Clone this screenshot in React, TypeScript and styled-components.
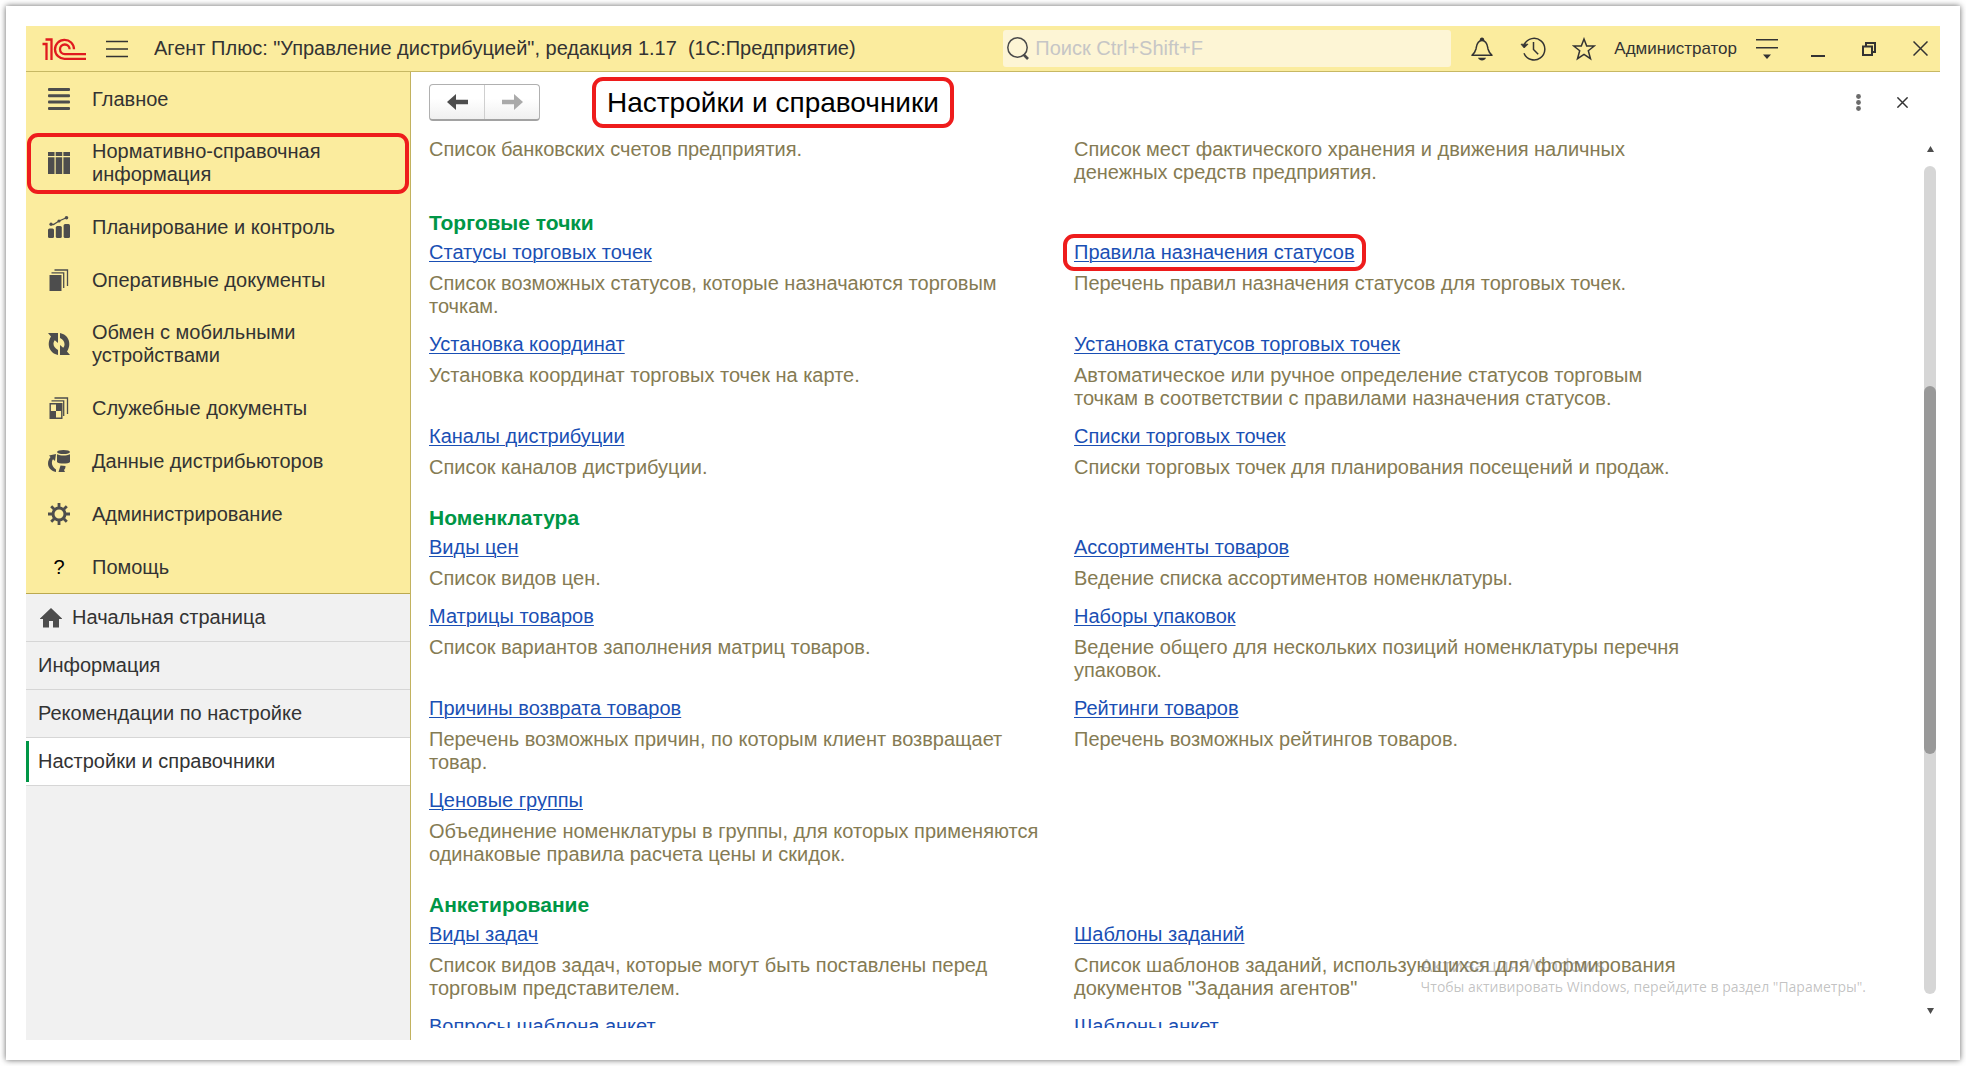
import React from "react";
import styled, { createGlobalStyle, css } from "styled-components";

const GlobalStyle = createGlobalStyle`
  *, *::before, *::after { box-sizing: border-box; }
  body {
    margin: 0;
    background: #fff;
    color: #333;
    font-family: "Liberation Sans", Arial, sans-serif;
    font-size: 20px;
    line-height: 23px;
  }
  h1, h2, p { margin: 0; }
  a { color: inherit; text-decoration: none; }
  button {
    margin: 0;
    padding: 0;
    border: 0;
    background: none;
    color: inherit;
    font: inherit;
    cursor: pointer;
  }
`;

const accent = css`
  border: 4px solid #ee1c1c;
  border-radius: 11px;
`;

const Page = styled.div`
  display: flex;
  height: 100vh;
  padding: 6px;
`;

const Card = styled.div`
  display: flex;
  flex: 1;
  min-width: 0;
  padding: 20px;
  background: #fff;
  box-shadow: 0 0 6px rgba(0, 0, 0, 0.6);
`;

const Window = styled.div`
  display: flex;
  flex: 1;
  flex-direction: column;
  min-width: 0;
`;

const TopBar = styled.header`
  display: flex;
  flex: none;
  align-items: center;
  gap: 11px;
  height: 46px;
  padding-left: 16px;
  background: #fbec9e;
  border-bottom: 1px solid #c7b864;
`;

const MenuButton = styled.button`
  display: flex;
  margin: 0 15px 0 8px;
`;

const AppTitle = styled.div`
  flex: 1;
  min-width: 0;
  overflow: hidden;
  white-space: nowrap;
`;

const Search = styled.label`
  display: flex;
  flex: 0 1 448px;
  align-items: center;
  gap: 6px;
  height: 37px;
  padding: 0 4px;
  border-radius: 3px;
  background: #fdf5d5;
`;

const SearchInput = styled.input`
  flex: 1;
  min-width: 0;
  padding: 0;
  border: 0;
  outline: 0;
  background: none;
  color: #333;
  font: inherit;
  &::placeholder { color: #c6c6c6; opacity: 1; }
`;

const BarButton = styled.button`
  display: flex;
  flex: none;
  align-items: center;
  justify-content: center;
  width: 40px;
  height: 40px;
`;

const UserName = styled.button`
  flex: none;
  margin: 0 -1px;
  font-size: 17px;
`;

const Body = styled.div`
  display: flex;
  flex: 1;
  min-height: 0;
`;

const Sidebar = styled.aside`
  display: flex;
  flex: none;
  flex-direction: column;
  width: 385px;
  background: #f1f1f1;
  border-right: 1px solid #c2b25f;
`;

const Sections = styled.nav`
  background: #fbec9e;
  border-bottom: 1px solid #bba94f;
`;

const SectionLink = styled.a<{ $marked?: boolean }>`
  position: relative;
  display: flex;
  align-items: center;
  gap: 22px;
  min-height: 53px;
  padding: 15px 60px 14px 22px;
  ${(p) =>
    p.$marked &&
    css`
      &::after {
        content: "";
        position: absolute;
        inset: 8px 1px 6px;
        ${accent}
      }
    `}
`;

const SectionIcon = styled.span`
  display: flex;
  flex: none;
  justify-content: center;
  width: 22px;
  color: #4d4d4d;
`;

const HelpMark = styled.span`
  color: #000;
`;

const Tabs = styled.nav`
  display: flex;
  flex-direction: column;
`;

const Tab = styled.a<{ $active?: boolean }>`
  position: relative;
  display: flex;
  align-items: center;
  gap: 10px;
  height: 48px;
  padding: 0 12px;
  border-bottom: 1px solid #d6d6d6;
  background: ${(p) => (p.$active ? "#fff" : "transparent")};
  ${(p) =>
    p.$active &&
    css`
      &::before {
        content: "";
        position: absolute;
        inset: 3px auto 3px 0;
        width: 3px;
        background: #009646;
      }
    `}
`;

const Main = styled.main`
  position: relative;
  display: flex;
  flex: 1;
  flex-direction: column;
  min-width: 0;
  padding-bottom: 12px;
`;

const PageHead = styled.div`
  display: flex;
  flex: none;
  align-items: center;
  padding: 5px 18px 5px 18px;
`;

const History = styled.div`
  display: flex;
  width: 111px;
  height: 37px;
  border: 1px solid #b0b0b0;
  border-bottom: 2px solid #a2a2a2;
  border-radius: 4px;
  background: linear-gradient(#fff 40%, #f0f0f0);
`;

const HistoryButton = styled.button`
  display: flex;
  flex: 1;
  align-items: center;
  justify-content: center;
  & + & { border-left: 1px solid #cfcfcf; }
`;

const PageTitle = styled.h1`
  margin: 0 auto 0 52px;
  padding: 6px 11px;
  color: #000;
  font-size: 28px;
  font-weight: 400;
  line-height: 31px;
  ${accent}
`;

const PageButton = styled(BarButton)`
  & + & { margin-left: 4px; }
`;

const Scroller = styled.div`
  display: flex;
  flex: 1;
  min-height: 0;
  padding-right: 4px;
`;

const Content = styled.div`
  flex: 1;
  min-width: 0;
  padding: 5px 18px 0;
  overflow: hidden;
`;

const Group = styled.section`
  & + & { margin-top: 27px; }
`;

const GroupTitle = styled.h2`
  margin-bottom: 7px;
  color: #009646;
  font-size: 21px;
  line-height: 23px;
`;

const Grid = styled.div`
  display: grid;
  grid-template-columns: repeat(2, minmax(0, 620px));
  gap: 15px 25px;
`;

const Command = styled.div`
  display: flex;
  flex-direction: column;
  align-items: flex-start;
  gap: 8px;
`;

const CommandLink = styled.a<{ $marked?: boolean }>`
  position: relative;
  color: #1a4fb4;
  text-decoration: underline;
  text-decoration-thickness: 1px;
  text-underline-offset: 2px;
  ${(p) =>
    p.$marked &&
    css`
      &::after {
        content: "";
        position: absolute;
        inset: -7px -11px;
        ${accent}
      }
    `}
`;

const Description = styled.p`
  color: #857b53;
`;

const Scrollbar = styled.div`
  display: flex;
  flex: none;
  flex-direction: column;
  align-items: center;
  gap: 7px;
  width: 12px;
  padding: 6px 0 7px;
`;

const ScrollArrow = styled.button`
  display: flex;
  flex: none;
  align-items: center;
  justify-content: center;
  width: 12px;
  height: 20px;
`;

const Track = styled.div`
  display: flex;
  flex: 1;
  flex-direction: column;
  width: 12px;
  border-radius: 6px;
  background: #d6d6d6;
`;

const Space = styled.div<{ $grow: number }>`
  flex: ${(p) => p.$grow} 1 0;
`;

const Thumb = styled.div`
  flex: 367 1 0;
  border-radius: 6px;
  background: #999;
`;

const Watermark = styled.div`
  position: absolute;
  right: 74px;
  bottom: 42px;
  color: rgba(120, 120, 120, 0.45);
  font-family: "Open Sans", "Noto Sans", sans-serif;
  font-size: 14px;
  line-height: 22px;
  white-space: nowrap;
  pointer-events: none;
`;

const WatermarkTitle = styled.div`
  font-size: 19px;
`;

const Logo = () => (
  <svg width="45" height="24" viewBox="0 0 45 24" fill="none" stroke="#e01a1f" strokeWidth="2.3">
    <path d="M0.5 7h4v16M3.5 2.5h6V23" />
    <path d="M32 12.3A9.5 9.5 0 1 0 22.8 21.8H44" />
    <path d="M27.6 12.3A4.8 4.8 0 1 0 22.8 17.1H44" />
  </svg>
);

const BurgerIcon = () => (
  <svg width="22" height="18" viewBox="0 0 22 18" stroke="#333" strokeWidth="1.3">
    <path d="M0 1.5h22M0 9h22M0 16.5h22" />
  </svg>
);

const SearchIcon = () => (
  <svg width="22" height="23" viewBox="0 0 22 23" fill="none" stroke="#4a4a4a" strokeWidth="1.5">
    <circle cx="10.5" cy="10.5" r="9.7" />
    <path d="M16.5 17.5l4.5 4.5" strokeWidth="2.6" />
  </svg>
);

const BellIcon = () => (
  <svg width="22" height="24" viewBox="0 0 22 24" fill="none" stroke="#333" strokeWidth="1.5">
    <path d="M1 18.2h20c-2-1.800-3.300-3.200-4-6.200-.6-3-.7-8.500-6-8.500S5.600 9 5 12c-.7 3-2 4.400-4 6.200z" strokeLinejoin="round" />
    <path d="M9.500 3.200a1.500 2 0 0 1 3 0z" fill="#333" />
    <path d="M7 20.800h8c-.8 1.900-2.200 2.600-4 2.600s-3.200-.7-4-2.600z" fill="#333" stroke="none" />
  </svg>
);

const ClockIcon = () => (
  <svg width="26" height="24" viewBox="0 0 26 24" fill="none" stroke="#333" strokeWidth="1.5">
    <path d="M4.300 7.500A10.800 10.800 0 1 1 4 16.200" />
    <path d="M1 7.200h7L4.200 11z" fill="#333" strokeWidth="0.8" />
    <path d="M13.500 5v7.500l4.700 4.700" />
  </svg>
);

const StarIcon = () => (
  <svg width="24" height="24" viewBox="0 0 24 24" fill="none" stroke="#333" strokeWidth="1.5">
    <path d="M12 2l2.700 7h7.600l-6 4.700 2.200 8L12 17.300l-6.500 4.400 2.200-8-6-4.700h7.600z" />
  </svg>
);

const PanelIcon = () => (
  <svg width="22" height="20" viewBox="0 0 22 20" fill="#333">
    <path d="M0 0h22v1.600H0zM0 8h22v1.600H0zM7 15.500h8l-4 4.500z" />
  </svg>
);

const MinimizeIcon = () => (
  <svg width="14" height="16" viewBox="0 0 14 16" fill="#333">
    <path d="M0 14h14v2H0z" />
  </svg>
);

const RestoreIcon = () => (
  <svg width="14" height="14" viewBox="0 0 14 14" fill="none" stroke="#333" strokeWidth="2">
    <path d="M1 4.500h9V13H1zM4 4V1h9v9h-3" />
  </svg>
);

const CloseIcon = ({ size = 15 }: { size?: number }) => (
  <svg width={size} height={size} viewBox="0 0 15 15" stroke="#333" strokeWidth={size > 12 ? 1.5 : 2}>
    <path d="M0.500 0.500l14 14M14.500 0.500l-14 14" />
  </svg>
);

const KebabIcon = () => (
  <svg width="5" height="17" viewBox="0 0 5 17" fill="#6b6b6b">
    <circle cx="2.500" cy="2.500" r="2.400" />
    <circle cx="2.500" cy="8.500" r="2.400" />
    <circle cx="2.500" cy="14.500" r="2.400" />
  </svg>
);

const ArrowIcon = ({ forward }: { forward?: boolean }) => (
  <svg width="21" height="16" viewBox="0 0 21 16" fill={forward ? "#aaa" : "#4d4d4d"}>
    {forward ? <path d="M21 8l-9-8v5.800H0v4.400h12V16z" /> : <path d="M0 8l9-8v5.800h12v4.400H9V16z" />}
  </svg>
);

const TriangleIcon = ({ down }: { down?: boolean }) => (
  <svg width="7" height="6" viewBox="0 0 7 6" fill="#4d4d4d">
    {down ? <path d="M0 0h7L3.500 6z" /> : <path d="M0 6h7L3.500 0z" />}
  </svg>
);

const HomeIcon = () => (
  <svg width="24" height="20" viewBox="-2 0 24 20" fill="#4d4d4d">
    <path d="M11 0l11 10.500v.5h-3v8.500h-6V13H9v6.500H3V11H0v-.5z" />
  </svg>
);

const icon = (children: React.ReactNode) => (
  <svg width="22" height="22" viewBox="0 0 22 22" fill="currentColor">
    {children}
  </svg>
);

const sections: { label: string; icon: React.ReactNode; marked?: boolean }[] = [
  {
    label: "Главное",
    icon: icon(
      <>
        <rect y="0" width="22" height="3" rx="1" />
        <rect y="6.300" width="22" height="3" rx="1" />
        <rect y="12.600" width="22" height="3" rx="1" />
        <rect y="19" width="22" height="3" rx="1" />
      </>,
    ),
  },
  {
    label: "Нормативно-справочная информация",
    marked: true,
    icon: icon(
      <path d="M0 0h6.500v4H0zM7.700 0h6.500v4H7.700zM15.400 0H22v4h-6.600zM0 5.200h6.500V22H0zM7.700 5.200h6.500V22H7.700zM15.400 5.200H22V22h-6.600z" />,
    ),
  },
  {
    label: "Планирование и контроль",
    icon: icon(
      <>
        <rect y="12.500" width="6" height="9.500" rx="1.500" />
        <rect x="7.800" y="10" width="6" height="12" rx="1.500" />
        <rect x="15.600" y="8" width="6.400" height="14" rx="1.500" />
        <path d="M2 8.500h3.500L11 5l8-3.500" fill="none" stroke="currentColor" strokeWidth="1.300" />
        <circle cx="3" cy="8.200" r="1.600" />
        <circle cx="11" cy="5" r="1.600" />
        <circle cx="18.500" cy="1.800" r="1.800" />
      </>,
    ),
  },
  {
    label: "Оперативные документы",
    icon: icon(
      <>
        <path d="M1.500 6h12v16h-12z" />
        <path d="M3.500 3.800h12.200V19M6.500 1h13v16" fill="none" stroke="currentColor" strokeWidth="1.300" />
      </>,
    ),
  },
  {
    label: "Обмен с мобильными устройствами",
    icon: icon(
      <>
        <path d="M0 0h10v10L6.800 7.200C4.500 10 5 14.500 10 17v5C.5 20-1.500 10.500 3 3.500z" />
        <path d="M22 22H12V12l3.200 2.800C17.500 12 17 7.500 12 5V0c9.500 2 11.500 11.500 7 18.500z" />
      </>,
    ),
  },
  {
    label: "Служебные документы",
    icon: icon(
      <>
        <path d="M2.200 6.700h11.600v14.600H2.200z" fill="none" stroke="currentColor" strokeWidth="1.400" />
        <path d="M8 7h6v7H8zM2 14h6v8H2z" />
        <path d="M3.500 3.800h12.200V19M6.500 1h13v16" fill="none" stroke="currentColor" strokeWidth="1.300" />
      </>,
    ),
  },
  {
    label: "Данные дистрибьюторов",
    icon: icon(
      <>
        <ellipse cx="15.500" cy="2" rx="6.500" ry="2" />
        <path d="M9 4.300c3.500 1.600 9.500 1.600 13 0V12c-1.500 2-11.500 2-13 0z" />
        <path d="M1 5.500l7-1.500-1 7-2-1.700C3 12 3.500 16.500 8 19.500V22C-.5 20-2 12.500 2.500 7z" />
        <path d="M12.500 15.500l5 .5c0 2-.5 3-1.500 4l1 2h-6.500z" />
      </>,
    ),
  },
  {
    label: "Администрирование",
    icon: icon(
      <g fill="none" stroke="currentColor">
        <circle cx="11" cy="11" r="6" strokeWidth="3" />
        <path
          d="M11 0v4M11 18v4M0 11h4M18 11h4M3.200 3.200l3 3M15.800 15.800l3 3M3.200 18.800l3-3M15.800 6.200l3-3"
          strokeWidth="2.800"
        />
      </g>,
    ),
  },
  { label: "Помощь", icon: <HelpMark>?</HelpMark> },
];

const tabs = ["Начальная страница", "Информация", "Рекомендации по настройке", "Настройки и справочники"];

type Item = { link?: string; text?: string; marked?: boolean } | null;

const groups: { title?: string; items: Item[] }[] = [
  {
    items: [
      { text: "Список банковских счетов предприятия." },
      { text: "Список мест фактического хранения и движения наличных денежных средств предприятия." },
    ],
  },
  {
    title: "Торговые точки",
    items: [
      { link: "Статусы торговых точек", text: "Список возможных статусов, которые назначаются торговым точкам." },
      {
        link: "Правила назначения статусов",
        text: "Перечень правил назначения статусов для торговых точек.",
        marked: true,
      },
      { link: "Установка координат", text: "Установка координат торговых точек на карте." },
      {
        link: "Установка статусов торговых точек",
        text: "Автоматическое или ручное определение статусов торговым точкам в соответствии с правилами назначения статусов.",
      },
      { link: "Каналы дистрибуции", text: "Список каналов дистрибуции." },
      { link: "Списки торговых точек", text: "Списки торговых точек для планирования посещений и продаж." },
    ],
  },
  {
    title: "Номенклатура",
    items: [
      { link: "Виды цен", text: "Список видов цен." },
      { link: "Ассортименты товаров", text: "Ведение списка ассортиментов номенклатуры." },
      { link: "Матрицы товаров", text: "Список вариантов заполнения матриц товаров." },
      { link: "Наборы упаковок", text: "Ведение общего для нескольких позиций номенклатуры перечня упаковок." },
      { link: "Причины возврата товаров", text: "Перечень возможных причин, по которым клиент возвращает товар." },
      { link: "Рейтинги товаров", text: "Перечень возможных рейтингов товаров." },
      {
        link: "Ценовые группы",
        text: "Объединение номенклатуры в группы, для которых применяются одинаковые правила расчета цены и скидок.",
      },
      null,
    ],
  },
  {
    title: "Анкетирование",
    items: [
      { link: "Виды задач", text: "Список видов задач, которые могут быть поставлены перед торговым представителем." },
      {
        link: "Шаблоны заданий",
        text: 'Список шаблонов заданий, использующихся для формирования документов "Задания агентов"',
      },
      { link: "Вопросы шаблона анкет" },
      { link: "Шаблоны анкет" },
    ],
  },
];

export default function App() {
  return (
    <Page>
      <GlobalStyle />
      <Card>
        <Window>
          <TopBar>
            <Logo />
            <MenuButton aria-label="Меню">
              <BurgerIcon />
            </MenuButton>
            <AppTitle>Агент Плюс: "Управление дистрибуцией", редакция 1.17&nbsp; (1С:Предприятие)</AppTitle>
            <Search>
              <SearchIcon />
              <SearchInput type="text" placeholder="Поиск Ctrl+Shift+F" aria-label="Поиск" />
            </Search>
            <BarButton aria-label="Уведомления"><BellIcon /></BarButton>
            <BarButton aria-label="История"><ClockIcon /></BarButton>
            <BarButton aria-label="Избранное"><StarIcon /></BarButton>
            <UserName>Администратор</UserName>
            <BarButton aria-label="Настройка панелей"><PanelIcon /></BarButton>
            <BarButton aria-label="Свернуть"><MinimizeIcon /></BarButton>
            <BarButton aria-label="Восстановить"><RestoreIcon /></BarButton>
            <BarButton aria-label="Закрыть"><CloseIcon /></BarButton>
          </TopBar>
          <Body>
            <Sidebar>
              <Sections>
                {sections.map((s) => (
                  <SectionLink key={s.label} href="#" $marked={s.marked}>
                    <SectionIcon>{s.icon}</SectionIcon>
                    {s.label}
                  </SectionLink>
                ))}
              </Sections>
              <Tabs>
                {tabs.map((t, i) => (
                  <Tab key={t} href="#" $active={i === tabs.length - 1}>
                    {i === 0 && <HomeIcon />}
                    {t}
                  </Tab>
                ))}
              </Tabs>
            </Sidebar>
            <Main>
              <PageHead>
                <History>
                  <HistoryButton aria-label="Назад"><ArrowIcon /></HistoryButton>
                  <HistoryButton aria-label="Вперед"><ArrowIcon forward /></HistoryButton>
                </History>
                <PageTitle>Настройки и справочники</PageTitle>
                <PageButton aria-label="Еще"><KebabIcon /></PageButton>
                <PageButton aria-label="Закрыть страницу"><CloseIcon size={11} /></PageButton>
              </PageHead>
              <Scroller>
                <Content>
                  {groups.map((g, i) => (
                    <Group key={i}>
                      {g.title && <GroupTitle>{g.title}</GroupTitle>}
                      <Grid>
                        {g.items.map((item, j) => (
                          <Command key={j}>
                            {item?.link && (
                              <CommandLink href="#" $marked={item.marked}>
                                {item.link}
                              </CommandLink>
                            )}
                            {item?.text && <Description>{item.text}</Description>}
                          </Command>
                        ))}
                      </Grid>
                    </Group>
                  ))}
                </Content>
                <Scrollbar>
                  <ScrollArrow aria-label="Вверх"><TriangleIcon /></ScrollArrow>
                  <Track>
                    <Space $grow={220} />
                    <Thumb />
                    <Space $grow={240} />
                  </Track>
                  <ScrollArrow aria-label="Вниз"><TriangleIcon down /></ScrollArrow>
                </Scrollbar>
              </Scroller>
              <Watermark>
                <WatermarkTitle>Активация Windows</WatermarkTitle>
                Чтобы активировать Windows, перейдите в раздел "Параметры".
              </Watermark>
            </Main>
          </Body>
        </Window>
      </Card>
    </Page>
  );
}
